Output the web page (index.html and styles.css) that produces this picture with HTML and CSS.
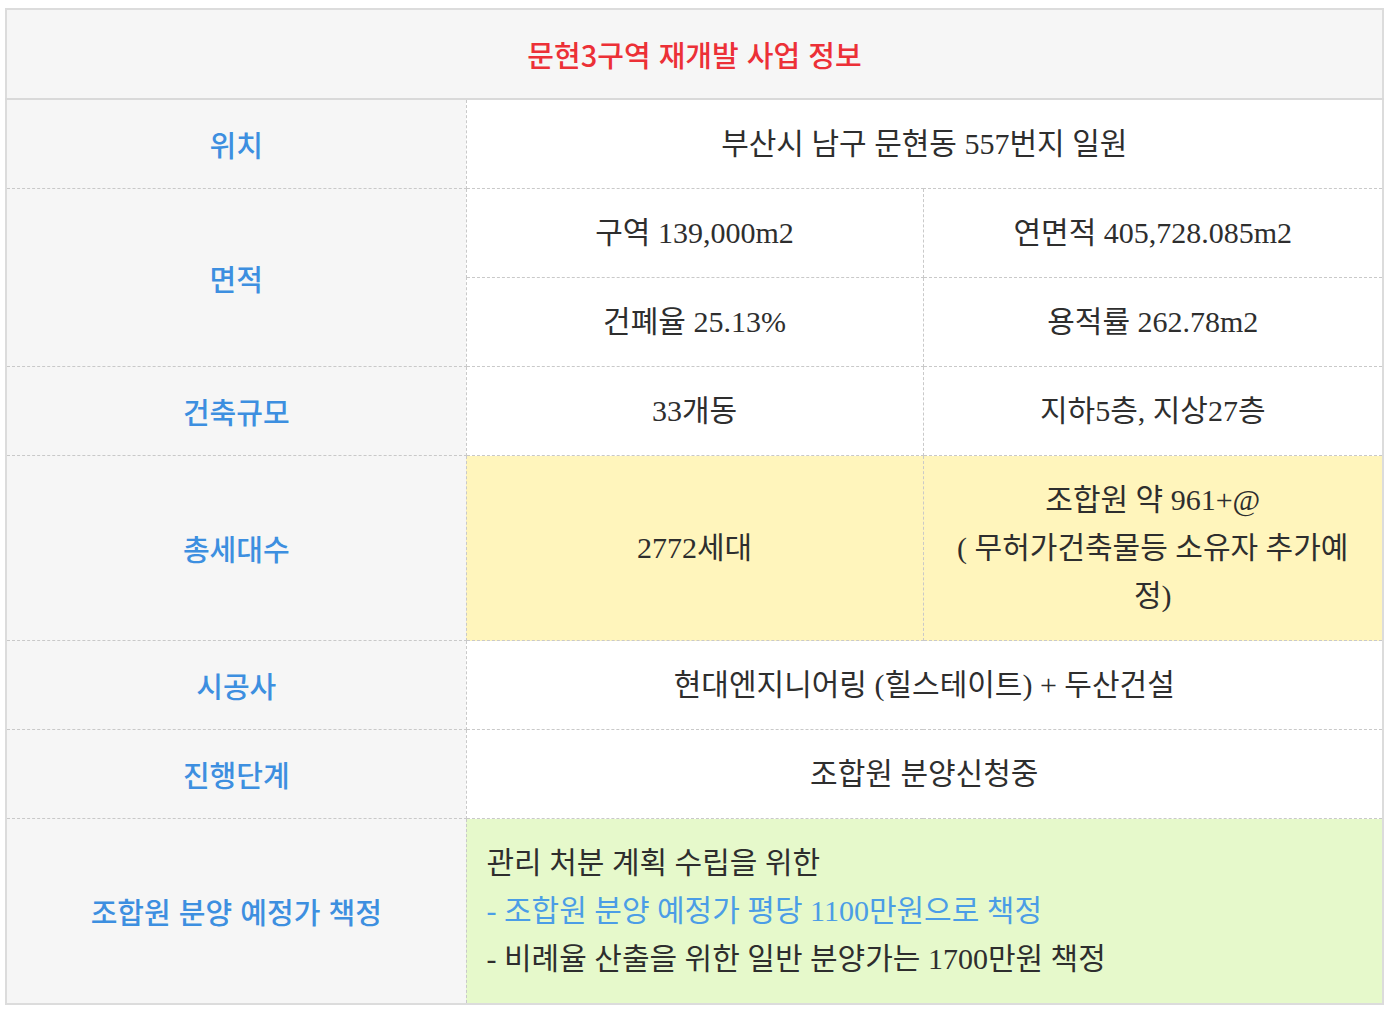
FILE: index.html
```html
<!DOCTYPE html>
<html lang="ko">
<head>
<meta charset="utf-8">
<title>문현3구역 재개발 사업 정보</title>
<link rel="stylesheet" href="styles.css">
</head>
<body>
<table class="info">
  <colgroup>
    <col class="c1"><col class="c2"><col class="c3">
  </colgroup>
  <tr>
    <th class="title" colspan="3">문현3구역 재개발 사업 정보</th>
  </tr>
  <tr>
    <td class="label">위치</td>
    <td colspan="2">부산시 남구 문현동 557번지 일원</td>
  </tr>
  <tr>
    <td class="label" rowspan="2">면적</td>
    <td>구역 139,000m2</td>
    <td>연면적 405,728.085m2</td>
  </tr>
  <tr>
    <td>건폐율 25.13%</td>
    <td>용적률 262.78m2</td>
  </tr>
  <tr>
    <td class="label">건축규모</td>
    <td>33개동</td>
    <td>지하5층, 지상27층</td>
  </tr>
  <tr>
    <td class="label">총세대수</td>
    <td class="yellow">2772세대</td>
    <td class="yellow">조합원 약 961+@<br>( 무허가건축물등 소유자 추가예<br>정)</td>
  </tr>
  <tr>
    <td class="label">시공사</td>
    <td colspan="2">현대엔지니어링 (힐스테이트) + 두산건설</td>
  </tr>
  <tr>
    <td class="label">진행단계</td>
    <td colspan="2">조합원 분양신청중</td>
  </tr>
  <tr>
    <td class="label">조합원 분양 예정가 책정</td>
    <td class="green left" colspan="2">관리 처분 계획 수립을 위한<br><span class="blue">- 조합원 분양 예정가 평당 1100만원으로 책정</span><br>- 비례율 산출을 위한 일반 분양가는 1700만원 책정</td>
  </tr>
</table>
</body>
</html>
```

FILE: styles.css
```css
html, body {
  margin: 0;
  padding: 0;
  background: #ffffff;
}

.info {
  margin: 8px 0 0 5px;
  width: 1377px;
  border-collapse: collapse;
  table-layout: fixed;
  border: 2px solid #dcdcdc;
  font-family: "Liberation Serif", "Noto Sans CJK KR", serif;
  font-size: 30px;
  color: #2e2e2e;
}

.c1 { width: 460px; }
.c2 { width: 457px; }
.c3 { width: 460px; }

.info th,
.info td {
  padding: 20px 16px;
  line-height: 48px;
  text-align: center;
  vertical-align: middle;
  border: 1px dashed #c9c9c9;
  font-weight: normal;
  white-space: nowrap;
}

.info th.title {
  background: #f6f6f6;
  color: #ec3037;
  font-family: "Noto Sans CJK KR", sans-serif;
  font-weight: 500;
  font-size: 29px;
  border: 2px solid #dcdcdc;
  border-bottom: 2px solid #d9d9d9;
  padding: 20px 20px;
}

.info td.label {
  background: #f6f6f6;
  color: #3d8fe0;
  font-family: "Noto Sans CJK KR", sans-serif;
  font-weight: 500;
  font-size: 29px;
  border-left: 2px solid #dcdcdc;
}

.info td.yellow {
  background: #fff5bc;
}

.info td.green {
  background: #e6f9cb;
}

.info td.left {
  text-align: left;
  padding-left: 20px;
}

.blue {
  color: #4b9de6;
}
```
